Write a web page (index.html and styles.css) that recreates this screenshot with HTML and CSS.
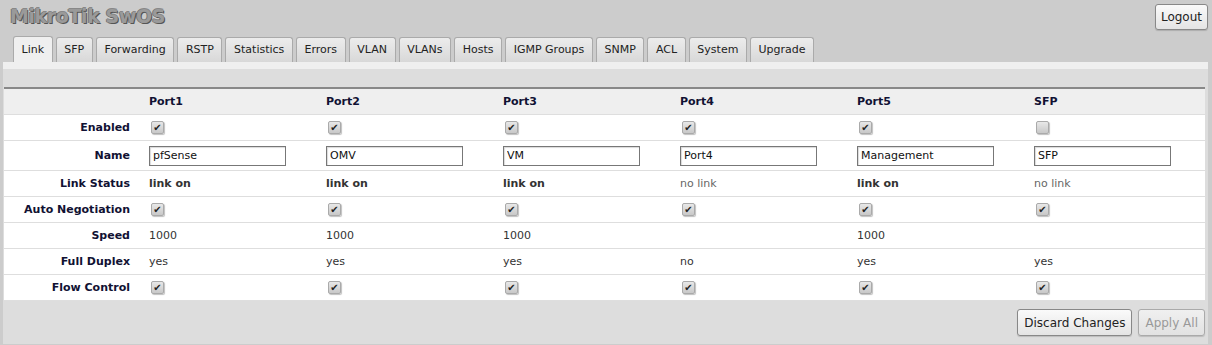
FILE: index.html
```html
<!DOCTYPE html>
<html lang="en">
<head>
    <meta charset="UTF-8">
    <meta name="viewport" content="width=device-width, initial-scale=1.0">
    <title>MikroTik SwOS</title>
    <link rel="stylesheet" href="styles.css">
</head>
<body>
    <!-- Header with title and logout -->
    <div class="header">
        <h1 class="title">MikroTik SwOS</h1>
        <button type="button" class="btn btn-logout">Logout</button>
    </div>

    <!-- Tabs -->
    <div class="tabs">
        <span class="tab active">Link</span>
        <span class="tab">SFP</span>
        <span class="tab">Forwarding</span>
        <span class="tab">RSTP</span>
        <span class="tab">Statistics</span>
        <span class="tab">Errors</span>
        <span class="tab">VLAN</span>
        <span class="tab">VLANs</span>
        <span class="tab">Hosts</span>
        <span class="tab">IGMP Groups</span>
        <span class="tab">SNMP</span>
        <span class="tab">ACL</span>
        <span class="tab">System</span>
        <span class="tab">Upgrade</span>
    </div>

    <div class="panel">
        <div class="panel-strip"></div>
        <div class="panel-body">
            <table class="link-table">
                <tr class="head">
                    <th></th>
                    <th>Port1</th><th>Port2</th><th>Port3</th><th>Port4</th><th>Port5</th><th>SFP</th>
                </tr>
                <tr>
                    <th>Enabled</th>
                    <td><span class="cb on">&#10004;</span></td>
                    <td><span class="cb on">&#10004;</span></td>
                    <td><span class="cb on">&#10004;</span></td>
                    <td><span class="cb on">&#10004;</span></td>
                    <td><span class="cb on">&#10004;</span></td>
                    <td><span class="cb"></span></td>
                </tr>
                <tr class="name-row">
                    <th>Name</th>
                    <td><input type="text" value="pfSense"></td>
                    <td><input type="text" value="OMV"></td>
                    <td><input type="text" value="VM"></td>
                    <td><input type="text" value="Port4"></td>
                    <td><input type="text" value="Management"></td>
                    <td><input type="text" value="SFP"></td>
                </tr>
                <tr>
                    <th>Link Status</th>
                    <td class="up">link on</td>
                    <td class="up">link on</td>
                    <td class="up">link on</td>
                    <td class="down">no link</td>
                    <td class="up">link on</td>
                    <td class="down">no link</td>
                </tr>
                <tr>
                    <th>Auto Negotiation</th>
                    <td><span class="cb on">&#10004;</span></td>
                    <td><span class="cb on">&#10004;</span></td>
                    <td><span class="cb on">&#10004;</span></td>
                    <td><span class="cb on">&#10004;</span></td>
                    <td><span class="cb on">&#10004;</span></td>
                    <td><span class="cb on">&#10004;</span></td>
                </tr>
                <tr>
                    <th>Speed</th>
                    <td>1000</td><td>1000</td><td>1000</td><td></td><td>1000</td><td></td>
                </tr>
                <tr>
                    <th>Full Duplex</th>
                    <td>yes</td><td>yes</td><td>yes</td><td>no</td><td>yes</td><td>yes</td>
                </tr>
                <tr>
                    <th>Flow Control</th>
                    <td><span class="cb on">&#10004;</span></td>
                    <td><span class="cb on">&#10004;</span></td>
                    <td><span class="cb on">&#10004;</span></td>
                    <td><span class="cb on">&#10004;</span></td>
                    <td><span class="cb on">&#10004;</span></td>
                    <td><span class="cb on">&#10004;</span></td>
                </tr>
            </table>

            <!-- Bottom actions -->
            <div class="actions">
                <button type="button" class="btn">Discard Changes</button>
                <button type="button" class="btn" disabled>Apply All</button>
            </div>
        </div>
    </div>
</body>
</html>
```

FILE: styles.css
```css
body {
    margin: 0;
    padding: 0 3px;
    background-color: #cccccc;
    font-family: "DejaVu Sans", Verdana, sans-serif;
    font-size: 11px;
    color: #222;
}
.header {
    display: flex;
    justify-content: space-between;
    align-items: flex-start;
    padding: 4px 1px 0 7px;
    height: 36px;
    box-sizing: border-box;
}
.title {
    margin: 0;
    font-family: "DejaVu Sans", Verdana, sans-serif;
    font-size: 19px;
    font-weight: bold;
    letter-spacing: -0.4px;
    color: #9a9a9a;
    text-shadow: 1px 1px 0 #555, -1px 0 0 #777, 0 -1px 0 #888;
    line-height: 24px;
}
.btn {
    font-family: "DejaVu Sans", Verdana, sans-serif;
    font-size: 12px;
    color: #222;
    background: linear-gradient(#fafafa, #e4e4e4);
    border: 1px solid #888;
    border-radius: 3px;
    padding: 0 6px;
    height: 27px;
    box-shadow: 0 1px 1px rgba(0, 0, 0, 0.15);
}
.btn[disabled] {
    color: #999;
    border-color: #aaa;
    background: linear-gradient(#f0f0f0, #e2e2e2);
}
.btn-logout {
    height: 26px;
    padding: 0 5px;
}

/* Tabs */
.tabs {
    display: flex;
    gap: 3px;
    padding-left: 10px;
    height: 26px;
    align-items: flex-end;
}
.tab {
    height: 25px;
    box-sizing: border-box;
    padding: 0 7.6px;
    line-height: 23px;
    font-size: 11px;
    border: 1px solid #aaa;
    border-bottom: none;
    border-radius: 3px 3px 0 0;
    background: linear-gradient(#ececec, #d8d8d8);
    color: #222;
}
.tab.active {
    background: #efefef;
    height: 26px;
    line-height: 25px;
}

/* Panel */
.panel {
    width: 1205px;
}
.panel-strip {
    height: 7px;
    background-color: #efefef;
}
.panel-body {
    background-color: #dddddd;
    padding: 18px 0 8px 1px;
}
.link-table {
    width: 1201px;
    border-collapse: collapse;
    background-color: #fff;
    border-top: 2px solid #888;
    table-layout: fixed;
}
.link-table th,
.link-table td {
    height: 25px;
    padding: 0 0 0 6px;
    border-bottom: 1px solid #dedede;
    text-align: left;
    vertical-align: middle;
    color: #333;
}
.link-table th {
    padding: 0 13px 0 0;
    text-align: right;
    font-weight: bold;
    color: #111133;
}
.link-table tr.head th {
    background-color: #efefef;
    text-align: left;
    color: #111133;
    padding: 0 0 0 6px;
    width: 171px;
}
.link-table tr.head th:first-child {
    width: 139px;
    padding: 0;
}
.link-table .name-row td,
.link-table .name-row th {
    height: 29px;
}
.link-table input[type="text"] {
    width: 137px;
    height: 20px;
    box-sizing: border-box;
    padding: 0 3px;
    border: 1px solid #777;
    font-family: "DejaVu Sans", Verdana, sans-serif;
    font-size: 11px;
    color: #111;
    box-shadow: inset 1px 1px 1px rgba(0, 0, 0, 0.15);
}
.up {
    font-weight: bold;
}
.link-table td.down {
    color: #666;
}

/* Checkbox look */
.cb {
    display: inline-block;
    width: 11px;
    height: 11px;
    border: 1px solid #aaa;
    border-radius: 2px;
    background: linear-gradient(#e8e8e8, #c8c8c8);
    box-shadow: 1px 1px 1px rgba(0, 0, 0, 0.25);
    font-size: 10px;
    line-height: 11px;
    text-align: center;
    color: #222;
    vertical-align: middle;
    margin-left: 2px;
}

.actions {
    display: flex;
    justify-content: flex-end;
    gap: 6px;
    padding: 8px 3px 0 0;
}
```
